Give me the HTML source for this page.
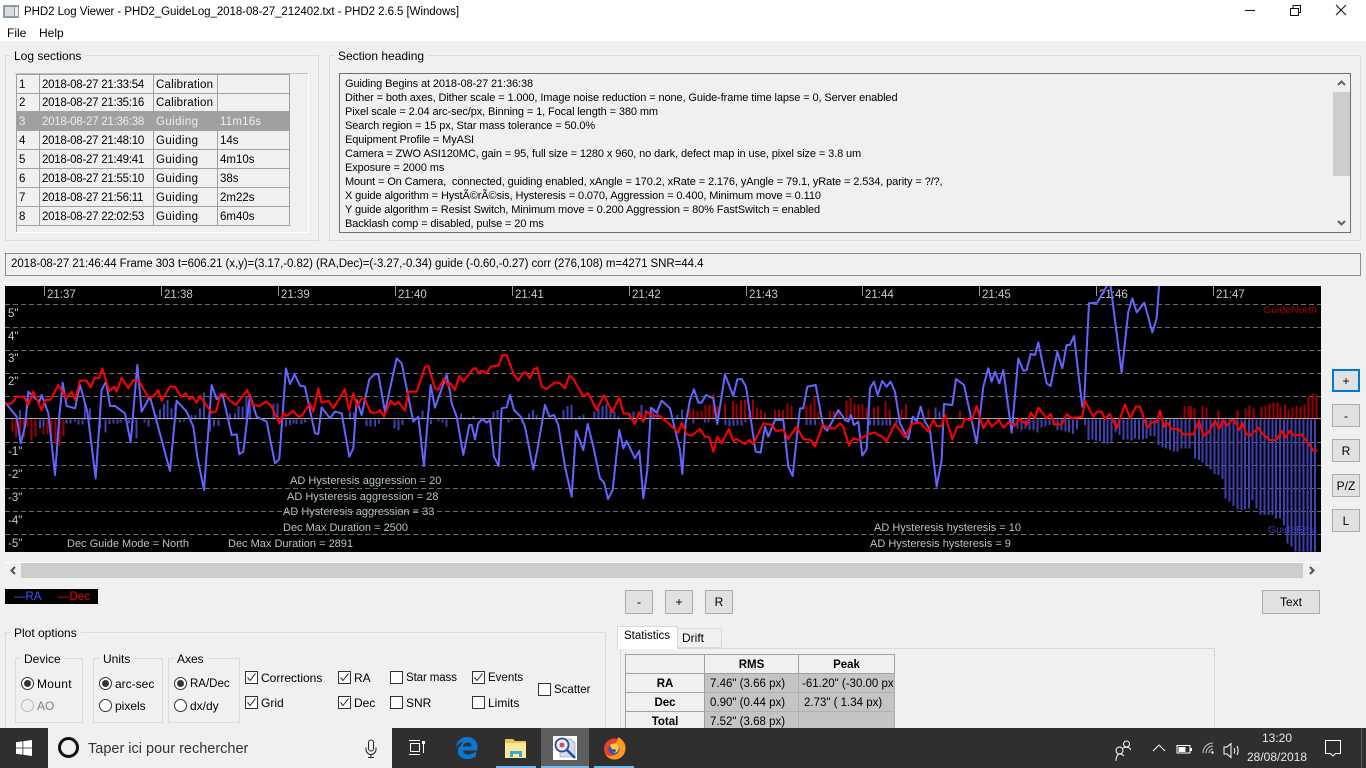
<!DOCTYPE html>
<html><head><meta charset="utf-8"><title>PHD2 Log Viewer</title>
<style>
html,body{margin:0;padding:0}
body{width:1366px;height:768px;overflow:hidden;position:relative;background:#f0f0f0;font-family:"Liberation Sans",sans-serif;font-size:12px;color:#000}
.t{position:absolute;white-space:nowrap;line-height:14px}
.b{position:absolute;box-sizing:border-box}
.g{position:absolute;box-sizing:border-box;border:1px solid #dcdcdc}
.btn{position:absolute;box-sizing:border-box;background:#e1e1e1;border:1px solid #adadad;text-align:center;font-size:12px;line-height:22px}
.r{position:absolute;box-sizing:border-box;width:13px;height:13px;border:1px solid #333;border-radius:50%;background:#fff}
.r.on:after{content:"";position:absolute;left:2px;top:2px;width:7px;height:7px;border-radius:50%;background:#333}
.c{position:absolute;box-sizing:border-box;width:13px;height:13px;border:1px solid #333;background:#fff}
.c svg{position:absolute;left:0;top:0}
.cell{position:absolute;box-sizing:border-box;border-right:1px solid #a0a0a0;border-bottom:1px solid #a0a0a0;height:19px;line-height:20px;padding-left:2px;font-size:11.500px;overflow:hidden;white-space:nowrap}
.sec{font-size:11px;left:345px;letter-spacing:-.11px}
.st{position:absolute;box-sizing:border-box;border-right:1px solid #a0a0a0;border-bottom:1px solid #a0a0a0;height:19px;line-height:20px;font-size:11.500px;white-space:nowrap;overflow:hidden;text-align:center}
.v{background:#c4c4c4;text-align:left;padding-left:5px;border-color:#b0b0b0}
.h{background:#f0f0f0;font-weight:bold}
</style></head><body>

<div class="b" style="left:0;top:0;width:1366px;height:41px;background:#fff"></div>
<svg class="b" style="left:3px;top:5px" width="16" height="14"><rect x="0" y="0" width="16" height="13" fill="#8a98a8"/><rect x="2" y="2" width="9" height="9" fill="#d8dde0"/><rect x="12" y="2" width="3" height="9" fill="#f0f0f0"/></svg>
<div class="t" style="left:24px;top:5px;font-size:11.500px;letter-spacing:-.06px">PHD2 Log Viewer - PHD2_GuideLog_2018-08-27_212402.txt - PHD2 2.6.5 [Windows]</div>
<div class="t" style="left:7px;top:26px">File</div>
<div class="t" style="left:39px;top:26px">Help</div>
<svg class="b" style="left:1240px;top:0" width="126" height="22" fill="none" stroke="#111"><path d="M5 10.500H15"/><path d="M50.500 8.500h8v7h-8zM53 8V5.500h7.500v7H59"/><path d="M96 5l10 10M106 5L96 15"/></svg>

<!-- Log sections -->
<div class="g" style="left:5px;top:55px;width:314px;height:186px"></div>
<div class="t" style="left:10px;top:49px;background:#f0f0f0;padding:0 4px">Log sections</div>
<div class="b" style="left:15px;top:73px;width:294px;height:160px;background:#f0f0f0;border-right:1px solid #fff;border-bottom:1px solid #fff"></div>
<div class="b" style="left:15px;top:73px;width:293px;height:1px;background:#c0c0c0"></div>
<div class="b" style="left:16px;top:74px;width:274px;height:152px;border-left:1px solid #a0a0a0;border-top:1px solid #a0a0a0;background:#f0f0f0"></div>
<div class="b" style="left:16px;top:226px;width:1px;height:6px;background:#a0a0a0"></div>
<div class="b" style="left:16px;top:111px;width:274px;height:20px;background:#a0a0a0"></div>

<div class="cell" style="left:17px;top:74.500px;width:23px">1</div><div class="cell" style="left:40px;top:74.500px;width:114px;letter-spacing:-.25px">2018-08-27 21:33:54</div><div class="cell" style="left:154px;top:74.500px;width:64px;letter-spacing:.2px">Calibration</div><div class="cell" style="left:218px;top:74.500px;width:72px"></div>
<div class="cell" style="left:17px;top:93px;width:23px">2</div><div class="cell" style="left:40px;top:93px;width:114px;letter-spacing:-.25px">2018-08-27 21:35:16</div><div class="cell" style="left:154px;top:93px;width:64px;letter-spacing:.2px">Calibration</div><div class="cell" style="left:218px;top:93px;width:72px"></div>
<div class="cell" style="left:17px;top:112px;width:23px;color:#eee;border-color:#a0a0a0">3</div><div class="cell" style="left:40px;top:112px;width:114px;letter-spacing:-.25px;color:#eee;border-color:#a0a0a0">2018-08-27 21:36:38</div><div class="cell" style="left:154px;top:112px;width:64px;color:#eee;border-color:#a0a0a0;letter-spacing:.4px">Guiding</div><div class="cell" style="left:218px;top:112px;width:72px;color:#eee;border-color:#a0a0a0;letter-spacing:.2px">11m16s</div>
<div class="cell" style="left:17px;top:131px;width:23px">4</div><div class="cell" style="left:40px;top:131px;width:114px;letter-spacing:-.25px">2018-08-27 21:48:10</div><div class="cell" style="left:154px;top:131px;width:64px;letter-spacing:.4px">Guiding</div><div class="cell" style="left:218px;top:131px;width:72px">14s</div>
<div class="cell" style="left:17px;top:150px;width:23px">5</div><div class="cell" style="left:40px;top:150px;width:114px;letter-spacing:-.25px">2018-08-27 21:49:41</div><div class="cell" style="left:154px;top:150px;width:64px;letter-spacing:.4px">Guiding</div><div class="cell" style="left:218px;top:150px;width:72px">4m10s</div>
<div class="cell" style="left:17px;top:169px;width:23px">6</div><div class="cell" style="left:40px;top:169px;width:114px;letter-spacing:-.25px">2018-08-27 21:55:10</div><div class="cell" style="left:154px;top:169px;width:64px;letter-spacing:.4px">Guiding</div><div class="cell" style="left:218px;top:169px;width:72px">38s</div>
<div class="cell" style="left:17px;top:188px;width:23px">7</div><div class="cell" style="left:40px;top:188px;width:114px;letter-spacing:-.25px">2018-08-27 21:56:11</div><div class="cell" style="left:154px;top:188px;width:64px;letter-spacing:.4px">Guiding</div><div class="cell" style="left:218px;top:188px;width:72px">2m22s</div>
<div class="cell" style="left:17px;top:207px;width:23px">8</div><div class="cell" style="left:40px;top:207px;width:114px;letter-spacing:-.25px">2018-08-27 22:02:53</div><div class="cell" style="left:154px;top:207px;width:64px;letter-spacing:.4px">Guiding</div><div class="cell" style="left:218px;top:207px;width:72px">6m40s</div>

<!-- Section heading -->
<div class="g" style="left:329px;top:55px;width:1032px;height:186px"></div>
<div class="t" style="left:334px;top:49px;background:#f0f0f0;padding:0 4px">Section heading</div>
<div class="b" style="left:339px;top:73px;width:1012px;height:160px;border:1px solid #707070;background:#f0f0f0"></div>
<div class="t sec" style="top:77px">Guiding Begins at 2018-08-27 21:36:38</div>
<div class="t sec" style="top:91px">Dither = both axes, Dither scale = 1.000, Image noise reduction = none, Guide-frame time lapse = 0, Server enabled</div>
<div class="t sec" style="top:105px">Pixel scale = 2.04 arc-sec/px, Binning = 1, Focal length = 380 mm</div>
<div class="t sec" style="top:119px">Search region = 15 px, Star mass tolerance = 50.0%</div>
<div class="t sec" style="top:133px">Equipment Profile = MyASI</div>
<div class="t sec" style="top:147px">Camera = ZWO ASI120MC, gain = 95, full size = 1280 x 960, no dark, defect map in use, pixel size = 3.8 um</div>
<div class="t sec" style="top:161px">Exposure = 2000 ms</div>
<div class="t sec" style="top:175px">Mount = On Camera,&nbsp; connected, guiding enabled, xAngle = 170.2, xRate = 2.176, yAngle = 79.1, yRate = 2.534, parity = ?/?,</div>
<div class="t sec" style="top:189px">X guide algorithm = HystÃ©rÃ©sis, Hysteresis = 0.070, Aggression = 0.400, Minimum move = 0.110</div>
<div class="t sec" style="top:203px">Y guide algorithm = Resist Switch, Minimum move = 0.200 Aggression = 80% FastSwitch = enabled</div>
<div class="t sec" style="top:217px">Backlash comp = disabled, pulse = 20 ms</div>
<div class="b" style="left:1333px;top:74px;width:17px;height:158px;background:#f0f0f0"></div>
<div class="b" style="left:1333px;top:92px;width:17px;height:84px;background:#cdcdcd"></div>
<svg class="b" style="left:1333px;top:74px" width="17" height="158" fill="none" stroke="#606060" stroke-width="2"><path d="M5 11l3.500-3.500L12 11"/><path d="M5 147l3.500 3.500L12 147"/></svg>

<!-- status -->
<div class="b" style="left:5px;top:253px;width:1356px;height:23px;border:1px solid #8c8c8c;background:#f0f0f0"></div>
<div class="t" style="left:11px;top:257px;font-size:11.500px;letter-spacing:-.065px">2018-08-27 21:46:44 Frame 303 t=606.21 (x,y)=(3.17,-0.82) (RA,Dec)=(-3.27,-0.34) guide (-0.60,-0.27) corr (276,108) m=4271 SNR=44.4</div>

<!-- plot -->
<svg class="b" style="left:5px;top:286px;background:#000" width="1316" height="266" viewBox="5 286 1316 266" font-family="Liberation Sans, sans-serif" font-size="11">
<g fill="#b8c4c8">
<text x="290" y="484">AD Hysteresis aggression = 20</text>
<text x="287" y="500">AD Hysteresis aggression = 28</text>
<text x="283" y="515">AD Hysteresis aggression = 33</text>
<text x="283" y="531">Dec Max Duration = 2500</text>
<text x="67" y="547">Dec Guide Mode = North</text>
<text x="228" y="547">Dec Max Duration = 2891</text>
<text x="874" y="531">AD Hysteresis hysteresis = 10</text>
<text x="870" y="547">AD Hysteresis hysteresis = 9</text>
</g>
<g fill="#c8c8c8" font-size="11.500">
<text x="8" y="317">5"</text><text x="8" y="340">4"</text><text x="8" y="362">3"</text><text x="8" y="385">2"</text>
<text x="8" y="455">-1"</text><text x="8" y="478">-2"</text><text x="8" y="501">-3"</text><text x="8" y="524">-4"</text><text x="8" y="547">-5"</text>
<text x="47" y="298">21:37</text><text x="164" y="298">21:38</text><text x="281" y="298">21:39</text><text x="398" y="298">21:40</text><text x="515" y="298">21:41</text><text x="632" y="298">21:42</text><text x="749" y="298">21:43</text><text x="865" y="298">21:44</text><text x="982" y="298">21:45</text><text x="1099" y="298">21:46</text><text x="1216" y="298">21:47</text>
</g>
<text x="1263" y="313" fill="#a00000" font-size="10.500">GuideNorth</text>
<text x="1268" y="533" fill="#3c3cb4" font-size="10.500">GuideEast</text>
<g stroke="#6c6c6c" fill="none" shape-rendering="crispEdges">
<path d="M44.500 286v10M161.500 286v10M278.500 286v10M395.500 286v10M512.500 286v10M629.500 286v10M746.500 286v10M862.500 286v10M979.500 286v10M1096.500 286v10M1213.500 286v10" stroke="#999"/>
<path stroke-dasharray="5 3" d="M5 304.500H1321M5 327.500H1321M5 350.500H1321M5 373.500H1321M5 396.500H1321M5 442.500H1321M5 465.500H1321M5 488.500H1321M5 511.500H1321M5 534.500H1321"/>
</g>
<g fill="none" stroke-width="6">
<g transform="translate(0,280) scale(.3333)" shape-rendering="crispEdges">
<path stroke="#a00000" d="M38 418V455M48 418V472M60 418V470M72 418V472M83 418V440M95 418V482M107 418V470M130 418V462M143 418V462M155 418V470M167 418V490M179 418V497M190 418V470"/>
<path stroke="#4040b0" d="M60 418V390M120 418V445M130 418V440M200 418V430M212 418V430M225 418V425M235 418V433M247 418V433M255 418V370M270 418V385M300 418V445M316 418V458M328 418V432M340 418V430M352 418V430M362 418V428M375 418V420M387 418V430M398 418V430M410 418V475M433 418V428M445 418V440M470 418V405M480 418V388M492 418V372M503 418V360M515 418V385M527 418V372M540 418V428M552 418V424M575 418V405M587 418V405M600 418V385M612 418V338M630 418V455M642 418V440M655 418V438M690 418V400M705 418V400M715 418V378M727 418V380M740 418V350M750 418V372M820 418V370M832 418V370M858 418V440M870 418V435M880 418V430M890 418V432M905 418V432M915 418V428M1050 418V395M1062 418V398M1100 418V438M1112 418V440M1125 418V440M1137 418V430M1183 418V445M1195 418V450M1207 418V435M1268 418V392M1293 418V432M1315 418V425M1327 418V428M1340 418V440"/>
</g>
<g transform="translate(450,280) scale(.3333)" shape-rendering="crispEdges">
<path stroke="#a00000" d="M718 418V385M730 418V385M742 418V395M755 418V392M767 418V375M779 418V375M791 418V340M803 418V378M825 418V370M849 418V365M860 418V372M873 418V362M885 418V358M897 418V400M909 418V358M921 418V382M933 418V390M945 418V398M975 418V390M987 418V390M999 418V390M1013 418V370M1025 418V378M1070 418V378M1082 418V370M1094 418V352M1106 418V395M1140 418V393M1152 418V393M1165 418V393M1189 418V363M1201 418V353M1213 418V372M1225 418V372M1237 418V372M1249 418V382M1272 418V382M1284 418V378M1307 418V365M1319 418V390"/>
<path stroke="#4040b0" d="M33 418V400M45 418V412M57 418V412M70 418V408M130 418V395M142 418V390M175 418V428M185 418V422M237 418V400M249 418V390M260 418V405M340 418V390M352 418V378M364 418V375M376 418V415M388 418V408M400 418V403M433 418V395M445 418V385M457 418V378M469 418V372M481 418V385M493 418V395M505 418V410M540 418V400M550 418V395M575 418V375M587 418V390M610 418V385M622 418V395M670 418V415M682 418V405M696 418V388M730 418V430M765 418V428M775 418V428M827 418V435M839 418V440M851 418V438M863 418V437M875 418V437M887 418V428M1070 418V435M1082 418V435M1095 418V435M1260 418V437M1272 418V437M1285 418V437M1297 418V437M1309 418V437M1320 418V437M1340 418V430"/>
</g>
<g transform="translate(900,280) scale(.3333)" shape-rendering="crispEdges">
<path stroke="#a00000" d="M5 418V387M18 418V372M85 418V388M180 418V393M853 418V378M865 418V378M873 418V378M884 418V385M908 418V378M920 418V382M955 418V392M1013 418V390M1037 418V385M1049 418V376M1061 418V385M1085 418V381M1097 418V378M1108 418V370M1120 418V368M1132 418V367M1142 418V382M1155 418V373M1166 418V388M1177 418V382M1190 418V378M1202 418V380M1214 418V373M1225 418V350M1238 418V340M1250 418V343"/>
<path stroke="#4040b0" d="M107 418V382M118 418V395M340 418V440M352 418V445M364 418V450M376 418V445M388 418V450M400 418V450M412 418V458M424 418V442M436 418V440M448 418V435M460 418V437M472 418V450M484 418V452M496 418V455M507 418V458M519 418V462M531 418V448M555 418V435M565 418V480M577 418V478M588 418V482M600 418V485M612 418V490M623 418V492M635 418V485M647 418V458M659 418V465M670 418V480M682 418V478M694 418V482M705 418V475M717 418V478M729 418V478M740 418V475M752 418V468M763 418V470M775 418V495M787 418V503M798 418V505M810 418V510M822 418V515M833 418V515M845 418V505M857 418V505M868 418V505M885 418V535M897 418V540M908 418V548M920 418V555M932 418V568M943 418V582M955 418V585M967 418V597M977 418V655M989 418V665M1000 418V678M1012 418V688M1024 418V690M1035 418V688M1047 418V685M1058 418V660M1070 418V685M1082 418V703M1093 418V705M1105 418V705M1117 418V705M1128 418V715M1140 418V715M1152 418V735M1163 418V790M1175 418V800M1187 418V815M1198 418V815M1210 418V815M1222 418V815M1233 418V815M1245 418V815"/>
</g>
</g>
<path d="M5 418.500H1321" stroke="#a8a8a8" shape-rendering="crispEdges"/>
<g fill="none" stroke-width="6" stroke-linejoin="round">
<path transform="translate(0,280) scale(.3333)" stroke="#6464ff" d="M15 367L50 410 62 490 75 440 85 335 105 355 118 365 125 345 145 400 165 585 178 410 188 308 200 378 225 385 240 315 262 395 287 595 305 330 318 305 330 378 345 378 375 400 392 487 412 255 425 395 450 350 510 573 530 362 560 395 580 440 592 530 612 630 635 315 650 358 668 345 695 465 710 463 718 523 730 515 750 345 770 410 800 425 825 550 838 537 858 265 870 312 884 283 900 317 915 320 945 460 955 462 965 382 990 415 1005 395 1025 400 1048 530 1060 505 1070 360 1085 405 1108 298 1125 282 1135 282 1155 395 1190 235 1205 250 1240 425 1255 410 1272 558 1292 315 1305 383 1340 285 1350 335"/>
<path transform="translate(450,280) scale(.3333)" stroke="#6464ff" d="M0 335L5 370 20 410 40 525 58 435 65 435 75 478 85 430 97 417 110 428 120 420 132 530 146 558 155 385 170 382 180 345 192 390 212 410 225 440 250 568 262 510 285 375 298 410 312 405 325 435 345 560 365 650 378 452 400 510 413 432 430 500 450 595 462 607 474 657 488 630 508 450 520 505 530 483 555 535 568 512 580 655 592 570 603 383 620 398 635 362 660 385 690 510 697 582 707 430 720 360 732 328 745 368 755 368 768 345 790 355 802 432 825 283 850 348 862 298 875 297 888 320 917 515 932 518 945 440 955 470 975 420 1000 420 1015 560 1028 588 1050 385 1060 385 1072 320 1097 315 1120 440 1132 452 1165 390 1185 420 1195 425 1203 405 1212 435 1225 425 1237 527 1250 507 1260 325 1272 305 1283 345 1297 303 1310 320 1322 305 1335 335 1350 430"/>
<path transform="translate(900,280) scale(.3333)" stroke="#6464ff" d="M0 430L10 450 25 478 38 410 50 425 62 380 75 425 90 450 110 620 125 540 132 372 157 375 168 297 192 315 230 490 250 320 265 265 275 305 285 275 298 310 310 270 335 458 355 235 370 272 380 270 392 222 405 225 415 187 440 310 452 318 472 215 487 265 500 195 510 195 522 168 547 380 552 375 567 70 592 68 625 10 632 18 665 278 685 95 697 55 710 97 733 68 757 157 770 115 778 10"/>
<path transform="translate(0,280) scale(.3333)" stroke="#ff0000" d="M15 372L35 370 50 350 72 350 85 375 100 335 125 390 135 360 150 360 175 315 200 355 215 335 225 360 240 302 260 302 272 322 285 292 297 295 307 265 328 333 343 320 350 335 365 293 385 325 400 300 418 305 445 352 460 350 475 330 485 362 510 320 525 320 543 350 558 340 568 358 578 350 590 368 600 348 635 398 648 395 662 342 675 342 690 362 708 375 742 330 758 375 780 378 797 365 812 375 838 430 850 400 860 408 880 393 895 410 905 408 930 370 940 395 955 325 965 368 985 362 1000 385 1035 328 1047 390 1060 340 1072 380 1085 355 1095 357 1112 398 1130 398 1140 390 1152 410 1172 362 1185 375 1195 365 1215 392 1225 335 1250 335 1275 262 1285 257 1305 325 1315 330 1332 295 1345 318 1350 308"/>
<path transform="translate(450,280) scale(.3333)" stroke="#ff0000" d="M0 308L15 330 28 287 40 305 70 265 78 265 85 280 95 272 110 280 122 260 145 257 158 225 170 225 192 285 205 302 220 278 228 278 240 295 252 268 262 263 275 320 290 327 315 307 330 310 345 325 358 287 370 297 400 350 415 340 440 390 462 345 487 397 508 352 520 400 535 400 555 432 567 397 580 425 590 395 605 407 630 408 650 425 685 458 695 428 710 462 725 467 750 447 765 470 778 472 790 515 802 470 815 490 837 447 850 483 860 477 885 492 898 480 910 492 940 430 965 435 978 453 1000 450 1015 477 1040 440 1060 477 1082 480 1095 500 1118 435 1140 445 1155 445 1170 430 1180 440 1197 497 1210 475 1225 480 1250 465 1275 457 1285 465 1297 470 1310 483 1335 432 1350 450"/>
<path transform="translate(900,280) scale(.3333)" stroke="#ff0000" d="M0 450L15 472 35 432 60 428 85 455 100 420 110 438 125 438 135 405 157 478 172 440 185 442 195 415 215 422 230 378 250 445 265 420 275 440 297 420 310 443 325 427 345 437 358 415 380 435 393 398 405 415 415 383 440 415 452 402 465 433 485 433 500 403 515 415 547 410 555 362 580 410 592 395 605 395 615 417 630 402 650 445 675 373 690 415 708 380 720 380 742 443 755 428 770 425 780 392 792 440 803 428 815 447 835 447 850 463 880 463 897 422 910 468 925 458 945 422 958 447 968 420 980 437 995 420 1003 420 1017 450 1027 428 1040 463 1050 467 1075 443 1087 460 1110 480 1130 480 1145 452 1157 473 1170 452 1182 467 1205 463 1225 490 1240 512 1252 512"/>
</g>
</svg>

<!-- right buttons -->
<div class="btn" style="left:1332px;top:369px;width:28px;height:23px;border:2px solid #0078d7;line-height:20px">+</div>
<div class="btn" style="left:1332px;top:404px;width:28px;height:23px">-</div>
<div class="btn" style="left:1332px;top:439px;width:28px;height:23px">R</div>
<div class="btn" style="left:1332px;top:474px;width:28px;height:23px">P/Z</div>
<div class="btn" style="left:1332px;top:509px;width:28px;height:23px">L</div>

<!-- scrollbar -->
<div class="b" style="left:5px;top:562px;width:1316px;height:17px;background:#f0f0f0;border-top:1px solid #fff"></div>
<div class="b" style="left:21px;top:563px;width:1282px;height:15px;background:#cdcdcd"></div>
<svg class="b" style="left:5px;top:563px" width="1316" height="15" fill="none" stroke="#505050" stroke-width="2"><path d="M10 4l-3.500 3.500L10 11"/><path d="M1305 4l3.500 3.500L1305 11"/></svg>

<!-- legend -->
<div class="b" style="left:5px;top:589px;width:93px;height:15px;background:#000"></div>
<div class="t" style="left:14px;top:590px;color:#5050ff;font-size:11.500px">—RA</div>
<div class="t" style="left:58px;top:590px;color:#f00000;font-size:11.500px">—Dec</div>

<div class="btn" style="left:625px;top:590px;width:28px;height:24px">-</div>
<div class="btn" style="left:665px;top:590px;width:28px;height:24px">+</div>
<div class="btn" style="left:705px;top:590px;width:28px;height:24px">R</div>
<div class="btn" style="left:1262px;top:590px;width:58px;height:24px">Text</div>

<!-- plot options -->
<div class="g" style="left:5px;top:632px;width:601px;height:110px"></div>
<div class="t" style="left:10px;top:626px;background:#f0f0f0;padding:0 4px">Plot options</div>
<div class="g" style="left:15px;top:658px;width:68px;height:65px"></div>
<div class="t" style="left:21px;top:652px;background:#f0f0f0;padding:0 3px">Device</div>
<div class="g" style="left:93px;top:658px;width:70px;height:65px"></div>
<div class="t" style="left:100px;top:652px;background:#f0f0f0;padding:0 3px">Units</div>
<div class="g" style="left:168px;top:658px;width:72px;height:65px"></div>
<div class="t" style="left:174px;top:652px;background:#f0f0f0;padding:0 3px">Axes</div>

<div class="r on" style="left:21px;top:677px"></div><div class="t" style="left:37px;top:677px;letter-spacing:.3px">Mount</div>
<div class="r" style="left:21px;top:699px;border-color:#bbb;background:#f0f0f0"></div><div class="t" style="left:37px;top:699px;color:#808080">AO</div>
<div class="r on" style="left:99px;top:677px"></div><div class="t" style="left:115px;top:677px">arc-sec</div>
<div class="r" style="left:99px;top:699px"></div><div class="t" style="left:115px;top:699px">pixels</div>
<div class="r on" style="left:174px;top:677px"></div><div class="t" style="left:190px;top:677px;font-size:11.500px">RA/Dec</div>
<div class="r" style="left:174px;top:699px"></div><div class="t" style="left:190px;top:699px">dx/dy</div>

<div class="c" style="left:245px;top:671px"><svg width="11" height="11" fill="none" stroke="#222"><path d="M1.500 5.500l2.500 3 5.500-7"/></svg></div><div class="t" style="left:261px;top:671px">Corrections</div>
<div class="c" style="left:245px;top:696px"><svg width="11" height="11" fill="none" stroke="#222"><path d="M1.500 5.500l2.500 3 5.500-7"/></svg></div><div class="t" style="left:261px;top:696px">Grid</div>
<div class="c" style="left:338px;top:671px"><svg width="11" height="11" fill="none" stroke="#222"><path d="M1.500 5.500l2.500 3 5.500-7"/></svg></div><div class="t" style="left:354px;top:671px">RA</div>
<div class="c" style="left:338px;top:696px"><svg width="11" height="11" fill="none" stroke="#222"><path d="M1.500 5.500l2.500 3 5.500-7"/></svg></div><div class="t" style="left:354px;top:696px">Dec</div>
<div class="c" style="left:390px;top:671px"></div><div class="t" style="left:406px;top:671px;font-size:11.500px;letter-spacing:-.1px">Star mass</div>
<div class="c" style="left:390px;top:696px"></div><div class="t" style="left:406px;top:696px">SNR</div>
<div class="c" style="left:472px;top:671px"><svg width="11" height="11" fill="none" stroke="#222"><path d="M1.500 5.500l2.500 3 5.500-7"/></svg></div><div class="t" style="left:488px;top:671px;font-size:11.500px">Events</div>
<div class="c" style="left:472px;top:696px"></div><div class="t" style="left:488px;top:696px">Limits</div>
<div class="c" style="left:538px;top:683px"></div><div class="t" style="left:554px;top:683px;font-size:11.500px">Scatter</div>

<!-- tabs -->
<div class="b" style="left:620px;top:648px;width:595px;height:90px;border:1px solid #d9d9d9;background:#f0f0f0"></div>
<div class="b" style="left:678px;top:628px;width:44px;height:20px;border:1px solid #d9d9d9;border-left:0;background:#f0f0f0"></div>
<div class="t" style="left:682px;top:631px">Drift</div>
<div class="b" style="left:617px;top:626px;width:61px;height:23px;border:1px solid #d9d9d9;border-bottom:0;background:#fff"></div>
<div class="t" style="left:624px;top:629px;font-size:11.500px">Statistics</div>

<div class="b" style="left:625px;top:654px;width:270px;height:74px;border-left:1px solid #a0a0a0;border-top:1px solid #a0a0a0;background:#f0f0f0"></div>
<div class="st h" style="left:626px;top:655px;width:79px">&nbsp;</div>
<div class="st h" style="left:705px;top:655px;width:94px">RMS</div>
<div class="st h" style="left:799px;top:655px;width:96px">Peak</div>
<div class="st h" style="left:626px;top:674px;width:79px">RA</div>
<div class="st v" style="left:705px;top:674px;width:94px">7.46" (3.66 px)</div>
<div class="st v" style="left:799px;top:674px;width:96px;padding-left:3px">-61.20" (-30.00 px)</div>
<div class="st h" style="left:626px;top:693px;width:79px">Dec</div>
<div class="st v" style="left:705px;top:693px;width:94px">0.90" (0.44 px)</div>
<div class="st v" style="left:799px;top:693px;width:96px">2.73" ( 1.34 px)</div>
<div class="st h" style="left:626px;top:712px;width:79px">Total</div>
<div class="st v" style="left:705px;top:712px;width:94px">7.52" (3.68 px)</div>
<div class="st v" style="left:799px;top:712px;width:96px"></div>

<!-- taskbar -->
<div class="b" style="left:0;top:728px;width:1366px;height:40px;background:#2f2f2f"></div>
<svg class="b" style="left:16px;top:740px" width="16" height="16" fill="#fff"><path d="M0 2.300l6.500-.9v6.200H0zM7.300 1.300L16 0v7.600H7.300zM0 8.400h6.500v6.200L0 13.700zM7.300 8.400H16V16l-8.700-1.200z"/></svg>
<div class="b" style="left:48px;top:728px;width:344px;height:40px;background:#f0f0f0"></div>
<div class="b" style="left:58px;top:737px;width:21px;height:21px;border:3px solid #111;border-radius:50%"></div>
<div class="t" style="left:88px;top:741px;font-size:14.500px;line-height:17px;color:#333">Taper ici pour rechercher</div>
<svg class="b" style="left:364px;top:739px" width="14" height="20" fill="none" stroke="#222"><rect x="4.500" y="1" width="5" height="11" rx="2.500"/><path d="M2 8.500v2a5 5 0 0 0 10 0v-2M7 15.500v3M4 18.500h6"/></svg>
<svg class="b" style="left:408px;top:739px" width="18" height="18" fill="none" stroke="#fff"><path d="M1 1.500h11M1 15.500h11M2.500 4.500h9v8h-9zM15.500 3v11" /><rect x="14" y="2" width="3" height="3" fill="#fff" stroke="none"/></svg>
<svg class="b" style="left:456px;top:736px" width="22" height="24" viewBox="0 0 22 24"><path fill="#0a78d4" d="M11.500 1C5 1 .5 5.500.3 11.500 2 7.600 5 6 7.500 5.500 6 7 5 8.500 4.600 10.500c0 0-1.600 0-1.600 0C2 13 1.500 15 2 17c1 4 5 6 9 6 3.500 0 7-1 9-3v-5c-2 2-5 3.500-8 3.500-3 0-5-1.500-5.300-4H21c.6-2 .8-5-.5-8C19 3 15.500 1 11.500 1zM6.800 10.500c.5-2.500 2.500-4 5-4s4 1.500 4 4z"/></svg>
<svg class="b" style="left:505px;top:738px" width="22" height="21" viewBox="0 0 22 21"><path fill="#e8c25a" d="M0 1h8l2 2h11v17H0z"/><path fill="#fde89a" d="M0 5h21v15H0z"/><path fill="#3ba8dc" d="M5 19v-6h12v6h-3v-3H8v3z"/></svg>
<div class="b" style="left:541px;top:728px;width:48px;height:40px;background:#5e5e5e"></div>
<svg class="b" style="left:553px;top:736px" width="24" height="24" viewBox="0 0 24 24"><rect width="24" height="24" fill="#fff"/><path fill="#d4dcec" stroke="#8090b0" stroke-width=".6" d="M12 3h6l4 4v14H7v-8z"/><circle cx="9" cy="9" r="6.500" fill="#f2eef2" stroke="#1f4c9c" stroke-width="1.800"/><circle cx="9" cy="9" r="2.500" fill="#c0506a"/><path stroke="#1f4c9c" stroke-width="2.600" d="M13.500 13.500L22 22"/></svg>
<svg class="b" style="left:603px;top:736px" width="23" height="24" viewBox="0 0 23 24"><circle cx="11.500" cy="13" r="10.500" fill="#e8412c"/><path fill="#ff9a1f" d="M15 1c5 2.500 8 7 7.500 12-.5 6-5 10.500-11 10.500-4 0-7-2-9-5 3 2 6 2 8 1 3.500-1.500 5-4 4.500-7-.5-3-2-4-4-4.500 2-1.500 4-3.500 4-7z"/><circle cx="11" cy="13" r="5.500" fill="#3a4fb0"/><path fill="#ffcb2e" d="M7 9c2-2 6-2 8 0 1.500 2 1 5-1 7-1.500 1-3 1-4 .5 2 0 3-1 3-2.500-1-1-3-1-4-.5-.5-2-2-3-2-4.500z"/></svg>
<div class="b" style="left:496px;top:766px;width:40px;height:2px;background:#76b9ed"></div>
<div class="b" style="left:541px;top:766px;width:48px;height:2px;background:#76b9ed"></div>
<div class="b" style="left:594px;top:766px;width:40px;height:2px;background:#76b9ed"></div>

<svg class="b" style="left:1100px;top:728px" width="266" height="40" fill="none" stroke="#fff">
<circle cx="19.500" cy="22.500" r="3.500"/><path d="M16 33c0-5 2-7 4-7s3 1 4 2"/><circle cx="26.500" cy="16" r="3"/><path d="M23 20c1.500-1 5-1 6.500 0 .5.500 1 1 1 2"/>
<path d="M53 23l6-6 6 6"/>
<rect x="77" y="17.500" width="13" height="7.500" stroke-width="1"/><rect x="78.500" y="19" width="7" height="5" fill="#fff" stroke="none"/><rect x="90.500" y="20" width="1.500" height="3" fill="#fff" stroke="none"/>
<path stroke="#ccc" d="M103 25a10 10 0 0 1 10-10M106 25a7 7 0 0 1 7-7M109 25a4 4 0 0 1 4-4"/><circle cx="112.500" cy="24.500" r="1.200" fill="#fff" stroke="none"/>
<path d="M124 19h3l4-3.500v14l-4-3.500h-3zM134 20c1 1.500 1 4 0 5.500M137 18c1.500 3 1.500 6 0 9"/>
<path d="M225.500 12.500h15v13h-5l-2.500 2.500-2.500-2.500h-5z"/>
</svg>
<div class="t" style="left:1240px;top:731px;width:74px;text-align:center;color:#e8e8e8">13:20</div>
<div class="t" style="left:1240px;top:750px;width:74px;text-align:center;color:#e8e8e8">28/08/2018</div>
<div class="b" style="left:1361px;top:728px;width:1px;height:40px;background:#5a5a5a"></div>
</body></html>
